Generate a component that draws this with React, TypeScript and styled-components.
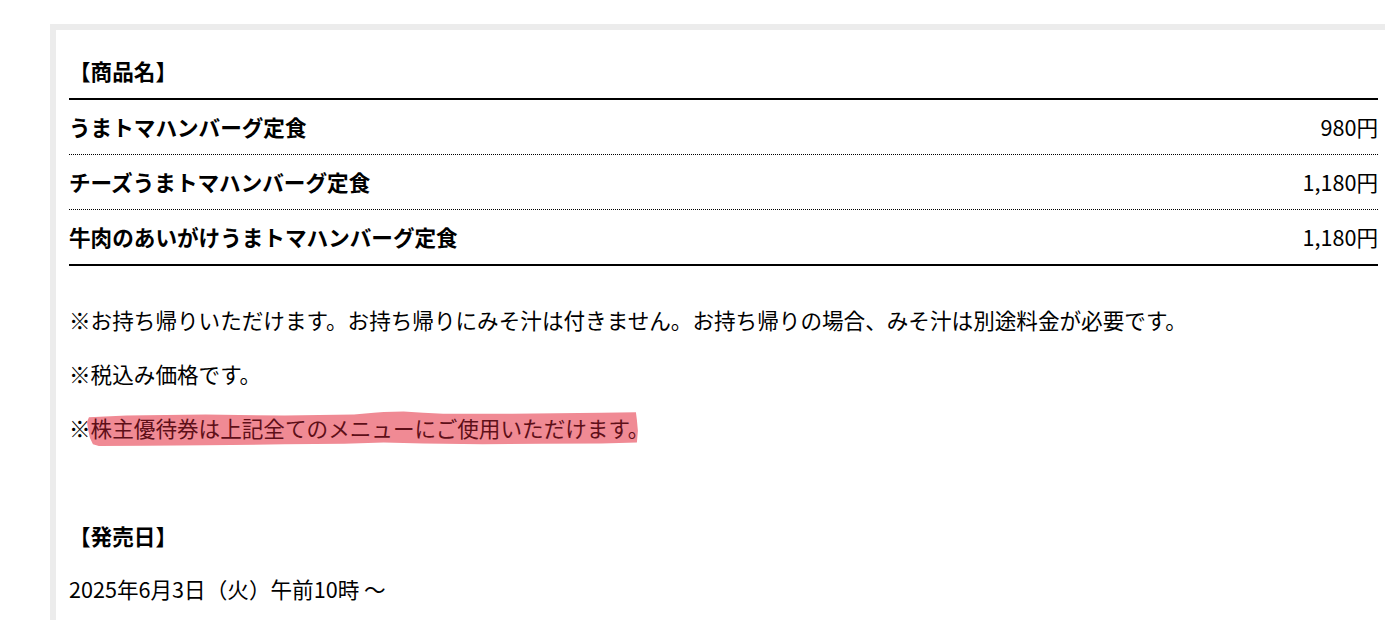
import styled, { createGlobalStyle } from "styled-components";

const GlobalStyle = createGlobalStyle`
  html, body {
    margin: 0;
    padding: 0;
    overflow: hidden;
    background: #ffffff;
  }
  body {
    font-family: "Noto Sans CJK JP", "Noto Sans", sans-serif;
    color: #000;
  }
`;

const Frame = styled.div`
  margin: 24px 0 0 50px;
  width: 1309px;
  padding: 25px 13px 40px;
  border: 6px solid #ececec;
  background: #fff;
`;

const Heading = styled.h3<{ gap?: number }>`
  margin: 0 0 ${(p) => p.gap ?? 11}px;
  font-size: 21.6px;
  line-height: 32px;
  font-weight: 700;
`;

const MenuList = styled.div`
  border-top: 2px solid #000;
  border-bottom: 2px solid #000;
`;

const MenuRow = styled.div`
  display: flex;
  align-items: center;
  justify-content: space-between;
  box-sizing: border-box;
  height: 55px;
  padding-bottom: 1px;
  font-size: 21.6px;
  border-bottom: 1px dotted #000;
  &:last-child {
    height: 54px;
    border-bottom: none;
  }
`;

const ItemName = styled.span`
  font-weight: 700;
`;

const Price = styled.span`
  font-weight: 400;
`;

const Notes = styled.div`
  margin: 38px 0 76px;
`;

const Note = styled.p`
  margin: 0 0 22px;
  font-size: 21.6px;
  line-height: 32px;
  &:last-child {
    margin-bottom: 0;
  }
`;

const Marked = styled.span`
  position: relative;
  display: inline-block;
  color: #5e0f18;
`;

const MarkerStroke = styled.svg`
  position: absolute;
  left: -4px;
  top: -1px;
  width: calc(100% - 5px);
  height: calc(100% + 4px);
  z-index: 0;
`;

const MarkedText = styled.span`
  position: relative;
  z-index: 1;
`;

const DateText = styled.p`
  margin: 0;
  font-size: 21.6px;
  line-height: 32px;
`;

const menu = [
  { name: "うまトマハンバーグ定食", price: "980円" },
  { name: "チーズうまトマハンバーグ定食", price: "1,180円" },
  { name: "牛肉のあいがけうまトマハンバーグ定食", price: "1,180円" },
];

function Highlight({ children }: { children: string }) {
  return (
    <Marked>
      <MarkerStroke viewBox="0 0 560 40" preserveAspectRatio="none">
        <path
          d="M2 7 L40 5 L120 4 L200 5 L270 4 L290 2 L300 1 L320 0.5 L340 2 L360 3 L430 3 L520 2 L555 1.5 L556 10 L557 22 L556 35 L520 36 L460 36.5 L400 37 L340 36 L300 35 L260 36.5 L200 37 L120 38 L60 38.5 L12 39 L6 37 L3 30 L1 20 L0 12 Z"
          fill="#f08a94"
        />
      </MarkerStroke>
      <MarkedText>{children}</MarkedText>
    </Marked>
  );
}

export default function App() {
  return (
    <>
      <GlobalStyle />
      <Frame>
        <Heading>【商品名】</Heading>
        <MenuList>
          {menu.map((item) => (
            <MenuRow key={item.name}>
              <ItemName>{item.name}</ItemName>
              <Price>{item.price}</Price>
            </MenuRow>
          ))}
        </MenuList>

        <Notes>
          <Note>
            ※お持ち帰りいただけます。お持ち帰りにみそ汁は付きません。お持ち帰りの場合、みそ汁は別途料金が必要です。
          </Note>
          <Note>※税込み価格です。</Note>
          <Note>
            ※<Highlight>株主優待券は上記全てのメニューにご使用いただけます。</Highlight>
          </Note>
        </Notes>

        <Heading gap={21}>【発売日】</Heading>
        <DateText>2025年6月3日（火）午前10時 〜</DateText>
      </Frame>
    </>
  );
}
